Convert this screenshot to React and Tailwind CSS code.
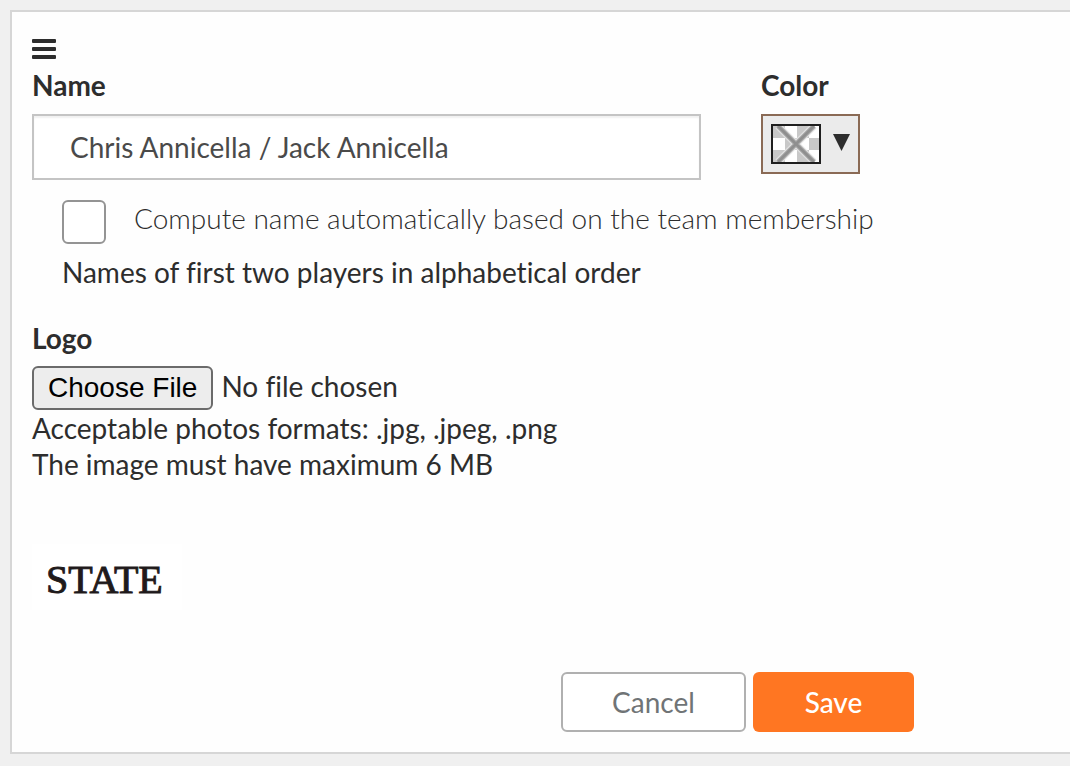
import { useState } from "react";

function MenuIcon() {
  return (
    <svg width="24" height="20" viewBox="0 0 24 20" fill="currentColor" aria-hidden="true">
      <rect width="24" height="4" rx="1" />
      <rect y="8" width="24" height="4" rx="1" />
      <rect y="16" width="24" height="4" rx="1" />
    </svg>
  );
}

function EmptySwatch() {
  return (
    <svg width="50" height="40" viewBox="0 0 50 40" aria-hidden="true">
      <rect width="50" height="40" fill="#fff" />
      <g fill="#c8c8c8">
        <rect x="2" y="2" width="12" height="12" />
        <rect x="26" y="2" width="12" height="12" />
        <rect x="14" y="14" width="12" height="12" />
        <rect x="38" y="14" width="10" height="12" />
        <rect x="2" y="26" width="12" height="12" />
        <rect x="26" y="26" width="12" height="12" />
      </g>
      <path d="M7 2 43 38M43 2 7 38" stroke="#e6e6e6" strokeWidth="7" />
      <path d="M7 2 43 38M43 2 7 38" stroke="#b0b0b0" strokeWidth="5" />
      <path d="M7 2 43 38M43 2 7 38" stroke="#8f8f8f" strokeWidth="3" />
      <rect x="1" y="1" width="48" height="38" fill="none" stroke="#1f1f1f" strokeWidth="2" />
    </svg>
  );
}

export default function App() {
  const [name, setName] = useState("Chris Annicella / Jack Annicella");
  const [auto, setAuto] = useState(false);

  return (
    <div className="min-h-screen bg-[#f0f0f0] py-2.5 pl-2.5 font-['Lato',sans-serif] text-[28px] leading-9 text-[#2d2d2d] [font-variant-ligatures:none]">
      <form
        className="border-2 border-r-0 border-[#d6d6d6] bg-[#fefefe] pt-[27px] pb-5 pl-5"
        onSubmit={(e) => e.preventDefault()}
      >
        <button type="button" aria-label="Menu" className="block">
          <MenuIcon />
        </button>

        <div className="mt-2 grid grid-cols-[669fr_309fr] gap-x-[60px]">
          <div>
            <label htmlFor="team-name" className="block font-bold">Name</label>
            <input
              id="team-name"
              type="text"
              value={name}
              onChange={(e) => setName(e.target.value)}
              className="mt-[11px] block h-[66px] w-full border-2 border-[#c4c4c4] bg-white px-9 text-[#4a4a4a] shadow-[inset_0_2px_2px_rgba(0,0,0,0.06)]"
            />
          </div>
          <div>
            <label htmlFor="team-color" className="block font-bold">Color</label>
            <button
              id="team-color"
              type="button"
              className="mt-[11px] flex h-[60px] items-center gap-3 border-2 border-[#8a6a55] bg-[#ebebeb] px-2"
            >
              <EmptySwatch />
              <svg width="17" height="17" viewBox="0 0 17 17" fill="currentColor" className="mb-1" aria-hidden="true">
                <path d="M0 0h17L8.500 17z" />
              </svg>
            </button>
          </div>
        </div>

        <div className="mt-5 flex gap-7 pl-[30px]">
          <input
            id="auto-name"
            type="checkbox"
            checked={auto}
            onChange={(e) => setAuto(e.target.checked)}
            className="size-11 shrink-0 appearance-none rounded-md border-2 border-[#949494] bg-white checked:bg-[#ff7622]"
          />
          <label htmlFor="auto-name" className="font-light">
            Compute name automatically based on the team membership
          </label>
        </div>
        <p className="mt-2.5 pl-[30px]">Names of first two players in alphabetical order</p>

        <label htmlFor="logo-file" className="mt-[30px] block font-bold">Logo</label>
        <input
          id="logo-file"
          type="file"
          accept=".jpg,.jpeg,.png"
          className="mt-2.5 block h-11 w-full file:mr-2 file:h-11 file:rounded-md file:border-2 file:border-solid file:border-[#6b6b6b] file:bg-[#ededed] file:px-3.5 file:font-['Liberation_Sans',sans-serif] file:text-[28px] file:text-black"
        />
        <p>Acceptable photos formats: .jpg, .jpeg, .png</p>
        <p>The image must have maximum 6 MB</p>

        <div className="mt-[62px] flex h-[66px] w-[150px] items-center bg-white pt-1.5 pl-3.5 font-['Liberation_Serif',serif] text-[40px] text-[#1f1a1b] [-webkit-text-stroke:1px_#1f1a1b]">
          STATE
        </div>

        <div className="mt-[62px] flex justify-end gap-[7px] pr-[156px]">
          <button type="button" className="h-[60px] w-[185px] rounded-md border-2 border-[#b0b0b0] bg-white text-[#707476]">
            Cancel
          </button>
          <button type="submit" className="h-[60px] w-[161px] rounded-md bg-[#ff7622] font-medium text-white">
            Save
          </button>
        </div>
      </form>
    </div>
  );
}
